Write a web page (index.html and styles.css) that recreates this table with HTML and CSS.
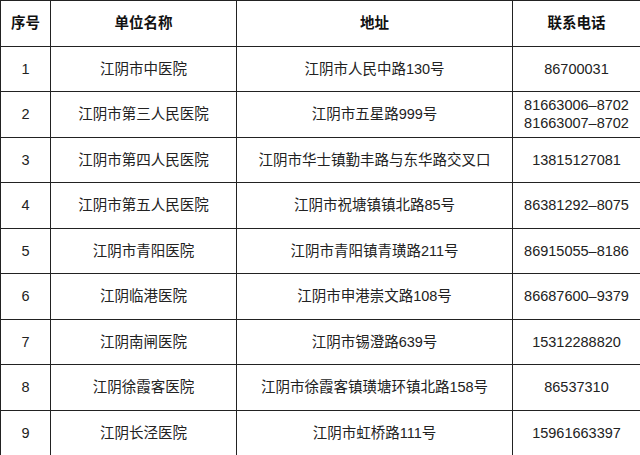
FILE: index.html
```html
<!DOCTYPE html>
<html lang="zh">
<head>
<meta charset="utf-8">
<link rel="stylesheet" href="styles.css">
</head>
<body>
<table class="list">
  <colgroup>
    <col class="c-no"><col class="c-name"><col class="c-addr"><col class="c-tel">
  </colgroup>
  <thead>
    <tr><th>序号</th><th>单位名称</th><th>地址</th><th>联系电话</th></tr>
  </thead>
  <tbody>
    <tr><td>1</td><td>江阴市中医院</td><td>江阴市人民中路130号</td><td>86700031</td></tr>
    <tr><td>2</td><td>江阴市第三人民医院</td><td>江阴市五星路999号</td><td>81663006–8702<br>81663007–8702</td></tr>
    <tr><td>3</td><td>江阴市第四人民医院</td><td>江阴市华士镇勤丰路与东华路交叉口</td><td>13815127081</td></tr>
    <tr><td>4</td><td>江阴市第五人民医院</td><td>江阴市祝塘镇镇北路85号</td><td>86381292–8075</td></tr>
    <tr><td>5</td><td>江阴市青阳医院</td><td>江阴市青阳镇青璜路211号</td><td>86915055–8186</td></tr>
    <tr><td>6</td><td>江阴临港医院</td><td>江阴市申港崇文路108号</td><td>86687600–9379</td></tr>
    <tr><td>7</td><td>江阴南闸医院</td><td>江阴市锡澄路639号</td><td>15312288820</td></tr>
    <tr><td>8</td><td>江阴徐霞客医院</td><td>江阴市徐霞客镇璜塘环镇北路158号</td><td>86537310</td></tr>
    <tr><td>9</td><td>江阴长泾医院</td><td>江阴市虹桥路111号</td><td>15961663397</td></tr>
  </tbody>
</table>
</body>
</html>
```
FILE: styles.css
```css
html, body {
  margin: 0;
  padding: 0;
  background: #fff;
}
.list {
  width: 640px;
  border-collapse: collapse;
  table-layout: fixed;
  font-family: "Liberation Sans", "Noto Sans CJK SC", sans-serif;
  font-size: 14.5px;
  color: #222;
}
.c-no { width: 50px; }
.c-name { width: 186px; }
.c-addr { width: 276px; }
.c-tel { width: 128px; }
.list tr {
  height: 45.5px;
}
.list th, .list td {
  border: 1.5px solid #222;
  text-align: center;
  vertical-align: middle;
  padding: 0;
  line-height: 18px;
  white-space: nowrap;
}
.list th {
  font-weight: bold;
  color: #111;
}
```
